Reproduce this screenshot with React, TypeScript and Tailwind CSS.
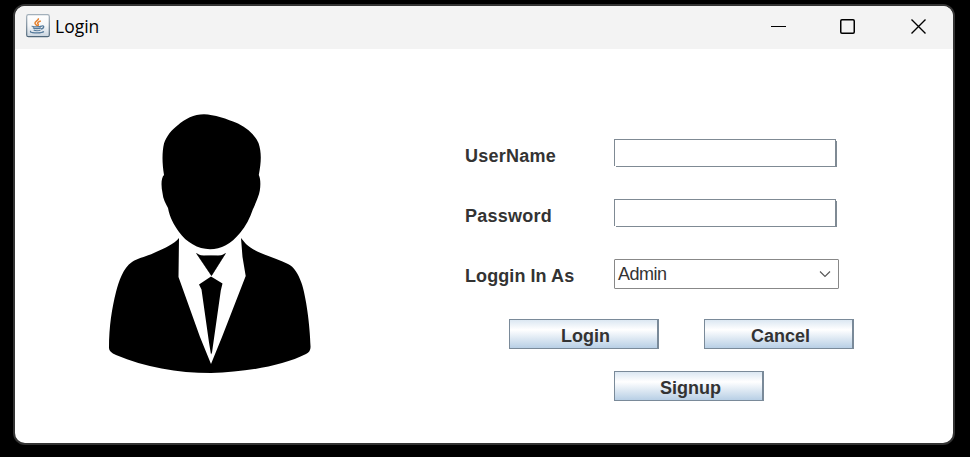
import React from "react";

function JavaIcon() {
  return (
    <svg className="block h-6 w-6" viewBox="0 0 24 24" fill="none">
      <defs>
        <linearGradient id="tile" x1="0" y1="0" x2="0" y2="1">
          <stop offset="0" stopColor="#ffffff" />
          <stop offset="0.5" stopColor="#f5f7f9" />
          <stop offset="1" stopColor="#c9d4de" />
        </linearGradient>
        <linearGradient id="edge" x1="0" y1="0" x2="0" y2="1">
          <stop offset="0" stopColor="#a3b0bb" />
          <stop offset="1" stopColor="#4f6679" />
        </linearGradient>
      </defs>
      <rect x="0.7" y="0.7" width="22.6" height="22" rx="1.8" fill="url(#tile)" stroke="url(#edge)" strokeWidth="1.2" />
      <path d="M12.400 4.200c.8 2-4 3.200-3.400 5.200.3 1 1.700 1.500 1.700 2.600M14.800 7c-2.600.8-4 1.900-2.700 3.100.6.6.2 1.300-.5 1.900" stroke="#e5812f" strokeWidth="1.500" />
      <path d="M6.400 11.900c-1.500 1.200 7.400 1.300 9.200.2M7 14c1.800.9 6 .9 8 0M7.700 16c1.500.9 5 .9 6.800 0M15.600 12c3.400-1 2.400 2.600-.6 3.100M5.200 17.200c-4 1.600 9.800 2.700 12.700.4" stroke="#54799a" strokeWidth="1.300" />
    </svg>
  );
}

function TitleBar() {
  return (
    <header className="flex h-[43px] shrink-0 items-center bg-[#f3f3f3] pl-[11px] text-black">
      <div className="mb-[3px]"><JavaIcon /></div>
      <span className="mb-[3px] ml-[5px] font-['Open_Sans',sans-serif] text-[17.5px] leading-6">Login</span>
      <div className="mr-[26px] ml-auto flex items-center pb-px">
        <svg className="h-4 w-4" viewBox="0 0 16 16"><path d="M0 7.500h15" stroke="black" strokeWidth="1" /></svg>
        <svg className="ml-[53px] h-4 w-4" viewBox="0 0 16 16"><rect x="0.750" y="0.750" width="13.500" height="13.500" rx="1.200" fill="none" stroke="black" strokeWidth="1.500" /></svg>
        <svg className="ml-[55px] h-4 w-4" viewBox="0 0 16 16"><path d="m.5.5 14 14M14.500.5l-14 14" stroke="black" strokeWidth="1.400" /></svg>
      </div>
    </header>
  );
}

function Silhouette() {
  return (
    <svg className="mt-14 ml-[85px] block h-[275px] w-[220px] shrink-0" viewBox="100 105 220 275">
      <path d="M204 114.300C214 114.500 227 119 238 123.500C248 128.500 255 135 258.500 143C261.500 152 261.500 161 258.800 175C261 179 261 190 258 197C256.500 201 254.500 206 253 209C250 218 246 226 240 233C231 244 221 249.200 210 249.200C198 249.200 186 242 179 232C174 225 169.500 217 168 208C165.500 203 163 199 162.500 193C161 186 161 178 164 175C162 163 162 152 164 143.500C166.500 136 171.500 130 178 125C185 119 194 114.300 204 114.300Z" />
      <path d="M179 238C174 244 165 248 156 252C148 256 138 258 132 262C123 268 119 281 116 292C112 308 109 326 109 348Q109 352 116 355C145 367 177 373 211 373C246 372 282 366 306 354Q311 352 310.500 346C310 325 306 296 301.500 283C298 273 294 267 288 264C276 258 255 253 246 244L241 238L242.500 257L245.700 276L222 337L211 364L200 337L178.500 277Z" />
      <path d="M196 253Q200 255.500 204 255.500H218Q222 255.500 226 253L211.500 276Z" />
      <path d="m211 276.500 11.500 7-1.700 7-8.800 62-1 2-2-12-7.500-53-2.500-5Z" />
      <path d="M196 253Q211 258 226 253L211.500 276Z" fill="white" />
      <path d="M196 253Q200 255.500 204 255.500H218Q222 255.500 226 253L211.500 276Z" />
    </svg>
  );
}

const field = "block h-7 w-[223px] border border-r-2 border-[#7f8a94] bg-white px-1 font-['Liberation_Sans',Arial,sans-serif] text-[18px] outline-none";

function Field({ label, type }: { label: string; type: string }) {
  return (
    <label className="flex h-[30px]">
      <span className="mt-[3px] w-[149px] leading-7 tracking-[0.250px]">{label}</span>
      <span className="relative block h-7">
        <input className={field} type={type} />
        <span className="absolute bottom-0 left-0 h-px w-[2px] bg-white" />
        <span className="absolute top-0 right-0 h-[2px] w-px bg-white" />
      </span>
    </label>
  );
}

function Button({ children }: { children: React.ReactNode }) {
  return (
    <button className="block h-[30px] w-[150px] border border-r-2 border-[#7a8a99] bg-linear-to-b from-[#dce7f2] via-white via-35% to-[#b8cfe5] pt-[4px] pl-[4px] text-center leading-[24px]">
      {children}
    </button>
  );
}

export default function App() {
  return (
    <main className="h-[457px] w-[970px] bg-black pt-1 pl-[13px] font-['Liberation_Sans',Arial,sans-serif] text-[18px] font-bold text-[#333333]">
      <section className="flex h-[441px] w-[942px] flex-col overflow-hidden rounded-[12px] border-2 border-[#333333] bg-white">
        <div className="font-normal"><TitleBar /></div>
        <div className="flex">
          <Silhouette />
          <form className="mt-[90px] ml-[145px]">
            <div className="flex flex-col gap-[30px]">
              <Field label="UserName" type="text" />
              <Field label="Password" type="password" />
              <div className="flex h-[30px]">
                <span className="mt-[3px] w-[149px] leading-7 tracking-[0.080px]">Loggin In As</span>
                <div className="flex h-[30px] w-[225px] items-center justify-between rounded-[1px] border border-[#888888] bg-white pr-[7px] pl-[3px] font-normal">
                  <span className="leading-7 tracking-[-0.500px]">Admin</span>
                  <svg className="h-3 w-3" viewBox="0 0 12 12"><path d="m1 3.500 5 5 5-5" fill="none" stroke="#555555" strokeWidth="1.100" /></svg>
                </div>
              </div>
            </div>
            <div className="mt-[30px] ml-[44px] flex gap-[45px]">
              <Button>Login</Button>
              <Button>Cancel</Button>
            </div>
            <div className="mt-[22px] ml-[149px]"><Button>Signup</Button></div>
          </form>
        </div>
      </section>
    </main>
  );
}
